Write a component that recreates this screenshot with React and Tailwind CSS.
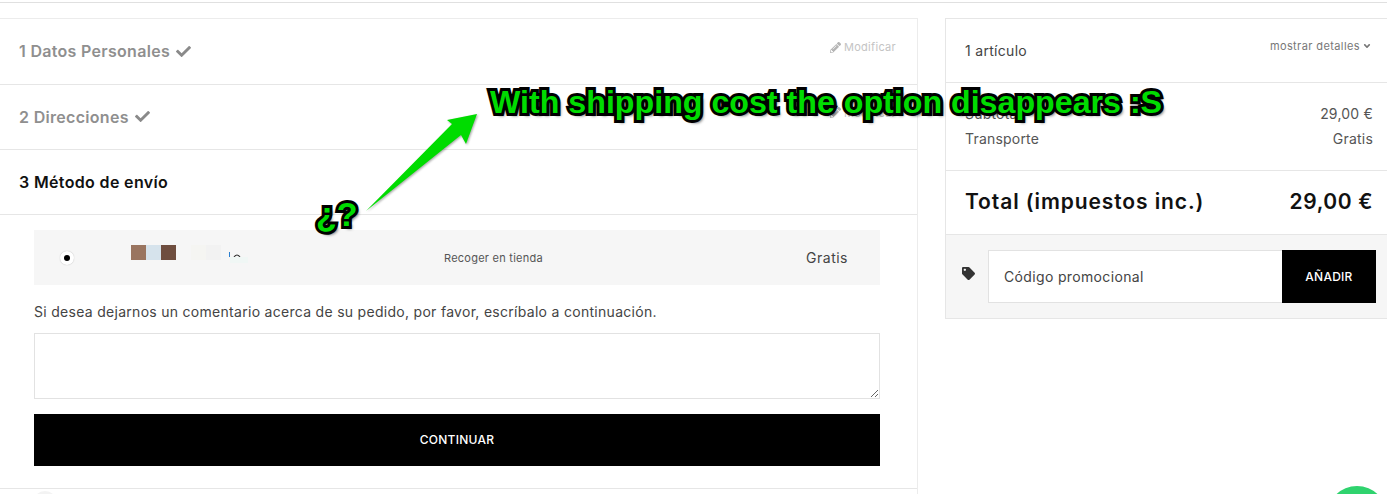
import { FaCheck, FaPencilAlt, FaTag, FaAngleDown } from "react-icons/fa";

function StepRow({ num, title, h }) {
  return (
    <div className={`flex items-center justify-between border-b border-[#e6e6e6] pb-px pl-[19px] pr-[21px] ${h}`}>
      <div className="flex items-center gap-[6px] text-[16px] leading-[24px] font-semibold tracking-[0.3px] text-[#8f8f8f]">
        <span>{num} {title}</span>
        <FaCheck className="text-[15px] text-[#8a8a8a]" />
      </div>
      <div className="mb-[8px] flex items-center gap-[3px] text-[11px] leading-[16px] tracking-[0.3px] text-[#c4c4c4]">
        <FaPencilAlt className="text-[11px] text-[#b5b5b5]" />
        <span>Modificar</span>
      </div>
    </div>
  );
}

function Annotations() {
  return (
    <>
      <svg className="absolute left-[360px] top-[105px] drop-shadow-[1px_1px_1px_rgba(0,0,0,0.35)]" width="125" height="112" viewBox="0 0 125 112">
        <path d="M6 106 L92 19 L87 15 L117 9 L106 39 L101 30 Z" fill="#00dc00" />
      </svg>
      <div className="absolute left-[316px] top-[190px] text-[34px] leading-[48px] font-bold whitespace-nowrap text-[#00dc00] [font-family:'Liberation_Sans',sans-serif] [-webkit-text-stroke:6px_#000] [paint-order:stroke_fill] [text-shadow:3px_3px_3px_rgba(0,0,0,0.55)]">
        ¿?
      </div>
      <div className="absolute left-[490px] top-[78px] text-[32.2px] leading-[48px] font-bold whitespace-nowrap text-[#00dc00] [font-family:'Liberation_Sans',sans-serif] [-webkit-text-stroke:6px_#000] [paint-order:stroke_fill] [text-shadow:3px_3px_3px_rgba(0,0,0,0.55)]">
        With shipping cost the option disappears :S
      </div>
    </>
  );
}

export default function App() {
  return (
    <div className="relative h-[494px] w-[1387px] overflow-hidden bg-white text-[14px] text-[#333] [font-family:Inter,sans-serif]">
      <div className="h-[3px] border-b border-[#e0e0e0]" />
      <div className="mt-[15px] flex items-start">
        {/* left column, the checkout steps */}
        <div className="h-[480px] w-[918px] border-t border-r border-[#ececec]">
          <StepRow num="1" title="Datos Personales" h="h-[66px]" />
          <StepRow num="2" title="Direcciones" h="h-[65px]" />
          <div className="flex h-[65px] items-center border-b border-[#e6e6e6] pb-px pl-[19px]">
            <div className="text-[16px] leading-[24px] font-semibold tracking-[0.35px] text-[#111]">
              3 Método de envío
            </div>
          </div>

          <div className="border-b border-[#e6e6e6] pb-[22px] pl-[34px] pr-[37px] pt-[15px]">
            <div className="flex h-[55px] items-center bg-[#f6f6f6]">
              <div className="ml-[26px] flex h-[14px] w-[14px] items-center justify-center rounded-full bg-white shadow-[0_0_1px_#aaa]">
                <div className="h-[6px] w-[6px] rounded-full bg-black" />
              </div>
              <div className="mb-[8px] ml-[57px] flex items-start">
                <div className="h-[15px] w-[15px] bg-[#9a7560]" />
                <div className="h-[15px] w-[15px] bg-[#d6e3ec]" />
                <div className="h-[15px] w-[15px] bg-[#6f4e3f]" />
                <div className="ml-[15px] h-[15px] w-[15px] bg-[#f5f5f2]" />
                <div className="h-[15px] w-[15px] bg-[#f2f2f2]" />
                <svg className="ml-[8px] mt-[7px]" width="20" height="11" viewBox="0 0 20 11">
                  <rect x="0" y="0" width="1" height="5" fill="#2a7fd0" />
                  <path d="M5 5 Q8 1 11 5" fill="none" stroke="#333" strokeWidth="1.2" />
                  <rect x="1" y="5" width="18" height="6" fill="#f0f7f5" />
                </svg>
              </div>
              <div className="ml-[195px] w-[102px] text-[11px] leading-[16px] tracking-[0.25px] text-[#555]">Recoger en tienda</div>
              <div className="ml-auto mr-[32px] text-[14px] tracking-[0.5px] text-[#444]">Gratis</div>
            </div>

            <p className="mt-[17px] text-[14px] leading-[20px] tracking-[0.29px] text-[#444]">
              Si desea dejarnos un comentario acerca de su pedido, por favor, escríbalo a continuación.
            </p>

            <textarea className="mt-[11px] block h-[66px] w-full border border-[#e2e2e2] bg-white" />

            <button className="mt-[15px] block h-[52px] w-full bg-black text-[12px] font-medium tracking-[0.25px] text-white">
              CONTINUAR
            </button>
          </div>
        </div>

        {/* right column, cart summary */}
        <div className="ml-[27px] h-[301px] flex-1 border-t border-b border-l border-[#e6e6e6]">
          <div className="flex h-[64px] items-start justify-between border-b border-[#e6e6e6] pl-[19px] pr-[15px]">
            <span className="mt-[22px] text-[14px] leading-[20px] tracking-[0.3px] text-[#444]">1 artículo</span>
            <span className="mt-[19px] flex items-center gap-[2px] text-[11px] leading-[16px] tracking-[0.4px] text-[#777]">
              mostrar detalles <FaAngleDown className="text-[10px]" />
            </span>
          </div>

          <div className="h-[88px] border-b border-[#e6e6e6] pl-[19px] pr-[14px] pt-[18px] text-[14px] leading-[25px] tracking-[0.2px] text-[#555]">
            <div className="flex justify-between">
              <span>Subtotal</span>
              <span>29,00 €</span>
            </div>
            <div className="flex justify-between">
              <span>Transporte</span>
              <span>Gratis</span>
            </div>
          </div>

          <div className="flex h-[64px] items-center justify-between border-b border-[#e6e6e6] pb-px pl-[19px] pr-[14px] text-[21px] font-semibold tracking-[0.9px] text-[#111]">
            <span>Total (impuestos inc.)</span>
            <span className="tracking-[0.6px]">29,00 €</span>
          </div>

          <div className="flex h-[83px] items-start bg-[#f6f6f6] pl-[16px] pt-[15px]">
            <FaTag className="mt-[17px] text-[13px] text-[#333]" />
            <div className="ml-[13px] flex h-[53px] w-[388px]">
              <div className="flex flex-1 items-center border border-r-0 border-[#e2e2e2] bg-white pb-px pl-[15px] text-[14px] tracking-[0.35px] text-[#444]">
                Código promocional
              </div>
              <button className="w-[94px] bg-black text-[12px] font-medium tracking-[0.25px] text-white">AÑADIR</button>
            </div>
          </div>
        </div>
      </div>

      <div className="absolute left-[33px] top-[491px] h-[24px] w-[24px] rounded-full bg-[#f3f3f3]" />
      <div className="absolute left-[1327px] top-[486px] h-[60px] w-[60px] rounded-full bg-[#2fd36e]" />
      <Annotations />
    </div>
  );
}
